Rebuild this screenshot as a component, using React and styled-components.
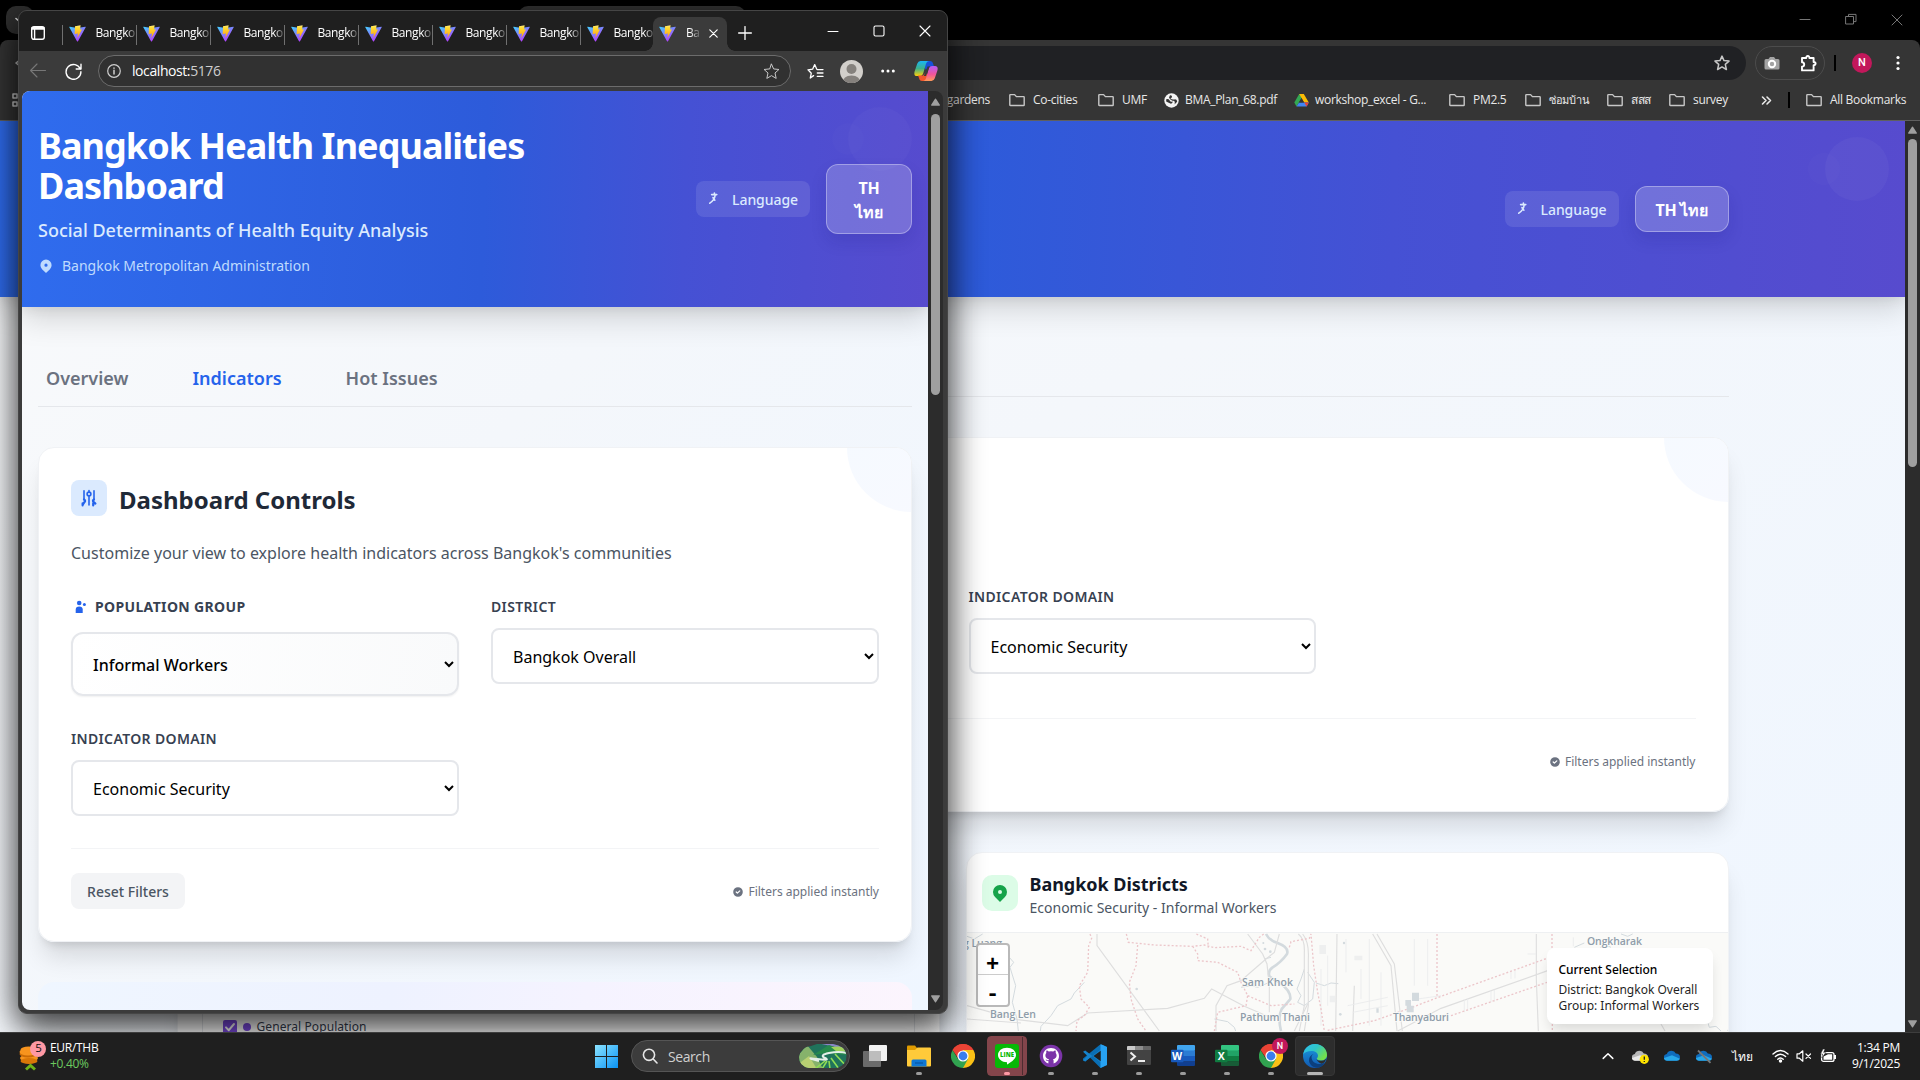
import React from "react";
import styled, { createGlobalStyle, css } from "styled-components";

const pageFont = `"Noto Sans", "Open Sans", sans-serif`;
const shellFont = `"Open Sans", "Noto Sans", sans-serif`;

const Global = createGlobalStyle`
  *, *::before, *::after { box-sizing: border-box; }
  body { margin: 0; overflow: hidden; background: #000; font-family: ${pageFont}; }
  h1, h2, h3, p { margin: 0; }
  svg { display: block; flex: none; }
`;

const Desktop = styled.div`
  position: relative;
  width: 1920px;
  height: 1080px;
  overflow: hidden;
  display: flex;
  flex-direction: column;
`;

/* ---------- Chrome window ---------- */
const ChromeWindow = styled.section`
  height: 1032px;
  display: flex;
  flex-direction: column;
  background: #000;
`;
const ChromeStrip = styled.div`
  height: 40px;
  display: flex;
  align-items: flex-start;
  padding: 6px 0 0 6px;
`;
const TabSearch = styled.div`
  width: 28px;
  height: 28px;
  border-radius: 10px;
  background: #2f2f2f;
  color: #ddd;
  display: flex;
  align-items: center;
  justify-content: center;
`;
const ChromeTab = styled.div`
  margin-left: 484px;
  width: 228px;
  height: 34px;
  border-radius: 10px 10px 0 0;
  background: #333;
`;
const ChromeControls = styled.div`
  margin: 7px 17px 0 auto;
  display: flex;
  gap: 34px;
  color: #777;
`;
const ChromeToolbar = styled.div`
  height: 40px;
  background: #353535;
  border-radius: 8px 8px 0 0;
  display: flex;
  align-items: center;
  padding: 6px 0 0 12px;
`;
const Omnibox = styled.div`
  margin-left: 118px;
  width: 1606px;
  height: 34px;
  border-radius: 17px;
  background: #202124;
  color: #c7c7c7;
  display: flex;
  align-items: center;
  justify-content: flex-end;
  padding-right: 16px;
`;
const ExtensionPill = styled.div`
  margin-left: 9px;
  width: 70px;
  height: 34px;
  border: 1px solid #4c4c4c;
  border-radius: 17px;
  display: flex;
  align-items: center;
  justify-content: space-between;
  padding: 0 7px 0 8px;
`;
const VLine = styled.div`
  width: 2px;
  height: 16px;
  background: #000;
  margin-left: ${(p) => p.$left}px;
`;
const Profile = styled.div`
  margin: 0 24px 0 16px;
  width: 20px;
  height: 20px;
  border-radius: 50%;
  background: #c2185b;
  color: #fff;
  font: 500 11px/20px Roboto, sans-serif;
  text-align: center;
`;
const Bookmarks = styled.div`
  height: 41px;
  background: #353535;
  border-bottom: 1px solid #5f5f5f;
  color: #e8e8e8;
  font: 12px/16px ${shellFont};
  letter-spacing: -0.3px;
  display: flex;
  align-items: center;
  padding-left: 12px;
`;
const FirstBookmark = styled.div`
  width: 983px;
  text-align: right;
  padding-right: 5px;
  margin: 0 14px 0 -14px;
`;
const Bookmark = styled.div`
  width: ${(p) => p.$w}px;
  margin-left: ${(p) => p.$left || 0}px;
  display: flex;
  align-items: center;
  gap: ${(p) => p.$gap || 8}px;
  white-space: nowrap;
  font-size: ${(p) => (p.$small ? 11 : 12)}px;
`;

/* ---------- Edge window ---------- */
const EdgeWindow = styled.section`
  position: absolute;
  left: 18px;
  top: 10px;
  width: 930px;
  height: 1004px;
  border-radius: 9px;
  background: #3b3b3b;
  border: 1px solid #454545;
  box-shadow: 0 12px 34px rgba(0, 0, 0, 0.68);
  overflow: hidden;
  display: flex;
  flex-direction: column;
`;
const EdgeShadow = styled.div`
  position: absolute;
  left: 18px;
  top: 10px;
  width: 930px;
  height: 1004px;
  border-radius: 9px;
  box-shadow: 0 12px 34px rgba(0, 0, 0, 0.3);
`;
const EdgeTabs = styled.div`
  height: 40px;
  background: #1f1f1f;
  display: flex;
  align-items: flex-end;
  padding-left: 12px;
  color: #fff;
`;
const Workspace = styled.div`
  width: 31px;
  height: 40px;
  flex: none;
  display: flex;
  align-items: center;
  padding-top: 4px;
`;
const EdgeTab = styled.div`
  width: 74px;
  flex: none;
  height: 34px;
  display: flex;
  align-items: center;
  padding: 0 0 2px ${(p) => (p.$active ? 6 : 6.5)}px;
  gap: 10px;
  font: 12px/16px ${shellFont};
  letter-spacing: -0.4px;
  background: linear-gradient(#707070, #707070) 0 8px / 1px 20px no-repeat;
  ${(p) =>
    p.$active &&
    css`
      background: #3b3b3b;
      border-radius: 8px 8px 0 0;
      position: relative;
      margin-left: -1px;
      &::before, &::after {
        content: "";
        position: absolute;
        bottom: 0;
        width: 8px;
        height: 8px;
      }
      &::before { left: -8px; background: radial-gradient(circle at 0 0, transparent 7.5px, #3b3b3b 8px); }
      &::after { right: -8px; background: radial-gradient(circle at 100% 0, transparent 7.5px, #3b3b3b 8px); }
    `}
`;
const TabLabel = styled.span`
  width: ${(p) => p.$w}px;
  overflow: hidden;
  white-space: nowrap;
  mask-image: linear-gradient(90deg, #000 ${(p) => p.$w - 9}px, transparent ${(p) => p.$w + 3}px);
`;
const EdgeControls = styled.div`
  height: 40px;
  flex: 1;
  display: flex;
  align-items: center;
  svg:first-child { margin: 3px 75px 0 11px; }
  svg:not(:first-child) { margin-right: 34px; }
`;
const EdgeToolbar = styled.div`
  height: 40px;
  display: flex;
  align-items: center;
  padding-left: 11px;
  color: #e8e8e8;
`;
const Gap = styled.span`
  width: ${(p) => p.$w}px;
  flex: none;
`;
const Address = styled.div`
  margin-left: 16px;
  width: 693px;
  height: 32px;
  border: 1px solid #6c6c6c;
  border-radius: 16px;
  background: #313131;
  display: flex;
  align-items: center;
  padding: 0 10px 0 8px;
  font: 14px/20px ${shellFont};
  letter-spacing: -0.42px;
  color: #cfcfcf;
  b { font-weight: 400; color: #fff; }
  span { margin: 0 auto 1px 11px; }
`;
const Avatar = styled.div`
  width: 23px;
  height: 23px;
  border-radius: 50%;
  overflow: hidden;
  margin: 0 18px 0 16px;
`;
const EdgeBody = styled.div`
  margin: 0 4px 0 3px;
  height: 919px;
  border-radius: 8px;
  overflow: hidden;
  display: flex;
`;

/* ---------- Scrollbar ---------- */
const ScrollTrack = styled.div`
  width: 15px;
  flex: none;
  background: #2c2c2c;
  display: flex;
  flex-direction: column;
  align-items: center;
  justify-content: space-between;
  padding: ${(p) => p.$pad};
`;
const Thumb = styled.div`
  width: 9px;
  height: ${(p) => p.$h}px;
  border-radius: 5px;
  background: #9f9f9f;
  margin: ${(p) => p.$top}px 0 auto;
`;

/* ---------- Dashboard page ---------- */
const PageRow = styled.div`
  display: flex;
  flex: 1;
  min-height: 0;
`;
const Page = styled.main`
  flex: 1;
  min-width: 0;
  overflow: hidden;
  background: linear-gradient(${(p) => p.$angle || "150deg"}, #f9fafb 0%, #f4f7fb 45%, #eff6ff 100%);
`;
const Hero = styled.header`
  position: relative;
  height: ${(p) => p.$h}px;
  padding: 0 ${(p) => p.$px}px;
  background: linear-gradient(92deg, #2f6cee 0%, #2d5bda 51%, #4551d4 73%, #574bce 100%);
  box-shadow: 0 12px 28px rgba(0, 0, 0, 0.15), 0 2px 12px rgba(0, 0, 0, 0.08);
  display: flex;
  align-items: center;
  justify-content: flex-end;
`;
const Bubble = styled.div`
  position: absolute;
  width: ${(p) => p.$d}px;
  height: ${(p) => p.$d}px;
  right: ${(p) => p.$right}px;
  top: ${(p) => p.$top}px;
  border-radius: 50%;
  background: rgba(255, 255, 255, ${(p) => p.$a});
`;
const HeroText = styled.div`
  align-self: flex-start;
  width: 560px;
  margin-right: auto;
  padding-top: 35px;
`;
const Title = styled.h1`
  color: #fff;
  font-size: 36px;
  line-height: 40px;
  font-weight: 700;
  letter-spacing: -0.95px;
`;
const Subtitle = styled.p`
  margin-top: 10px;
  color: #dbeafe;
  font-size: 18px;
  line-height: 28px;
  font-weight: 500;
`;
const Location = styled.div`
  margin-top: 12px;
  display: flex;
  align-items: center;
  gap: 8px;
  color: #bfdbfe;
  font-size: 14px;
  line-height: 20px;
`;
const LanguageChip = styled.div`
  width: 114px;
  height: 36px;
  padding-left: 12px;
  border-radius: 8px;
  background: rgba(255, 255, 255, 0.1);
  color: #dbeafe;
  font-size: 14px;
  line-height: 21px;
  font-weight: 500;
  letter-spacing: -0.05px;
  display: flex;
  align-items: center;
  gap: 8px;
`;
const LanguageButton = styled.button`
  margin-left: 16px;
  width: ${(p) => p.$w}px;
  padding: 11px 10px 9px;
  border: 1px solid rgba(255, 255, 255, 0.33);
  border-radius: 12px;
  background: rgba(255, 255, 255, 0.2);
  color: #fff;
  font: 700 16px/24px ${pageFont};
  letter-spacing: -0.3px;
  white-space: nowrap;
  box-shadow: 0 8px 16px rgba(20, 20, 120, 0.14);
  position: relative;
`;
const Container = styled.div`
  padding: 0 ${(p) => p.$px}px;
`;
const Nav = styled.nav`
  height: 100px;
  border-bottom: 1px solid #e5e7eb;
  margin-bottom: 40px;
  padding: 57px 0 0 8px;
  display: flex;
  gap: 64px;
`;
const NavItem = styled.a`
  color: ${(p) => (p.$active ? "#2563eb" : "#6b7280")};
  font-size: 18px;
  line-height: 28px;
  font-weight: 600;
`;
const Card = styled.section`
  position: relative;
  overflow: hidden;
  background: #fff;
  border: 1px solid #f0f2f5;
  border-radius: 16px;
`;
const CardShadow = styled.div`
  border-radius: 16px;
  box-shadow: 0 20px 25px -5px rgba(0, 0, 0, 0.12), 0 8px 10px -6px rgba(0, 0, 0, 0.13);
`;
const ControlsCard = styled(Card)`
  padding: 32px;
`;
const Corner = styled.div`
  position: absolute;
  right: -65px;
  top: -65px;
  width: 129px;
  height: 129px;
  border-radius: 50%;
  background: linear-gradient(135deg, #f5faff, #f8f9ff);
`;
const CardHead = styled.div`
  display: flex;
  gap: 12px;
  height: 36px;
  h2 { font-size: 24px; line-height: 32px; font-weight: 700; color: #1f2937; padding-top: 4px; }
`;
const IconTile = styled.div`
  width: 36px;
  height: 36px;
  border-radius: ${(p) => p.$r || 8}px;
  background: ${(p) => p.$bg};
  color: ${(p) => p.$c};
  display: flex;
  align-items: center;
  justify-content: center;
`;
const Intro = styled.p`
  margin-top: 25px;
  height: 24px;
  font-size: 16px;
  line-height: 24px;
  letter-spacing: 0.008px;
  color: #4b5563;
`;
const Fields = styled.div`
  margin-top: 32px;
  display: grid;
  grid-template-columns: repeat(${(p) => p.$cols}, 1fr);
  column-gap: 32px;
  row-gap: 33px;
  min-height: ${(p) => p.$min || 0}px;
  align-items: start;
`;
const Field = styled.label`
  grid-column: ${(p) => p.$col || "auto"};
  display: flex;
  flex-direction: column;
  gap: ${(p) => (p.$primary ? 15 : 11)}px;
`;
const FieldName = styled.span`
  display: flex;
  align-items: center;
  gap: 8px;
  height: 20px;
  color: #374151;
  font-size: 14px;
  line-height: 20px;
  font-weight: ${(p) => (p.$primary ? 700 : 600)};
  letter-spacing: 0.35px;
  svg { margin-left: 3px; margin-right: -1px; color: #2563eb; }
`;
const Select = styled.select`
  width: 100%;
  height: ${(p) => (p.$primary ? 64 : 56)}px;
  padding: 2px 0 0 16px;
  border: 2px solid #e5e7eb;
  border-radius: ${(p) => (p.$primary ? 12 : 8)}px;
  background: ${(p) => (p.$primary ? "linear-gradient(100deg, #fff, #f9fafb)" : "#fff")};
  box-shadow: ${(p) => (p.$primary ? "0 1px 2px rgba(0,0,0,.06)" : "none")};
  color: #000;
  font: ${(p) => (p.$primary ? 500 : 400)} 16px/24px ${pageFont};
`;
const CardFoot = styled.div`
  margin-top: 32px;
  border-top: 1px solid #f3f4f6;
  padding-top: 24px;
  height: 61px;
  display: flex;
  align-items: center;
  justify-content: space-between;
`;
const Reset = styled.button`
  width: 114px;
  height: 36px;
  border: 0;
  border-radius: 8px;
  background: #f3f4f6;
  color: #4b5563;
  font: 500 14px/20px ${pageFont};
  padding: 2px 0 0;
`;
const Applied = styled.div`
  margin-left: auto;
  padding-top: 1px;
  display: flex;
  align-items: center;
  gap: 4px;
  font-size: 12px;
  line-height: 16px;
  color: #6b7280;
`;
const NextCard = styled.div`
  margin-top: 40px;
  height: 120px;
  border-radius: 16px;
  background: linear-gradient(96deg, #eff6ff, #eef2ff 40%, #f5f3ff 62%, #fcf5fd);
`;
const TwoColumns = styled.div`
  margin-top: 40px;
  display: grid;
  grid-template-columns: 1fr 1fr;
  gap: 26px;
`;
const ChartCard = styled(Card)`
  height: 400px;
  padding: 24px;
`;
const ChartPanel = styled.div`
  height: 350px;
  border: 1px solid #e5e7eb;
  padding: 141px 0 0 20px;
`;
const Legend = styled.label`
  display: flex;
  align-items: center;
  font-size: 12px;
  line-height: 16px;
  letter-spacing: 0.08px;
  color: #374151;
`;
const Tick = styled.span`
  width: 14px;
  height: 14px;
  border-radius: 2px;
  background: #7c4be0;
  color: #fff;
  margin-right: 6px;
`;
const Dot = styled.span`
  width: 8px;
  height: 8px;
  border-radius: 50%;
  background: #7c4be0;
  margin-right: 6px;
`;
const MapHead = styled.div`
  height: 80px;
  padding: 22px 15px 0;
  border-bottom: 1px solid #eef0f2;
  display: flex;
  gap: 12px;
  h3 { font-size: 18px; line-height: 24px; font-weight: 700; color: #111827; margin-top: -3px; letter-spacing: -0.04px; }
  p { font-size: 14px; line-height: 20px; color: #4b5563; margin-top: 2px; }
`;
const MapArea = styled.div`
  position: relative;
  height: 320px;
  background: #fafaf8;
`;
const ZoomControl = styled.div`
  position: absolute;
  left: 9px;
  top: 10px;
  width: 34px;
  border: 2px solid #b9b9b9;
  border-radius: 4px;
  background: #fff;
  color: #000;
`;
const ZoomKey = styled.div`
  height: 30px;
  font: 700 22px/${(p) => (p.$line ? 41 : 39)}px "Liberation Mono", monospace;
  text-align: center;
  border-bottom: ${(p) => (p.$line ? "1px solid #ccc" : "0")};
`;
const Selection = styled.div`
  position: absolute;
  right: 15px;
  top: 15px;
  width: 166px;
  height: 76px;
  padding: 14px 12px 0;
  border-radius: 8px;
  background: #fff;
  box-shadow: 0 8px 14px -3px rgba(0, 0, 0, 0.14);
  font-size: 12px;
  line-height: 16px;
  color: #1f1f1f;
  white-space: nowrap;
  b { display: block; font-weight: 500; margin-bottom: 4px; color: #000; letter-spacing: -0.04px; }
`;

/* ---------- Taskbar ---------- */
const Taskbar = styled.footer`
  position: relative;
  height: 48px;
  background: #1f1f1f;
  box-shadow: inset 0 1px 0 #3d3d3d;
  display: flex;
  align-items: center;
  font-family: ${shellFont};
  color: #fff;
`;
const Ticker = styled.div`
  width: 584px;
  padding-left: 19px;
  display: flex;
  align-items: center;
  gap: 3px;
  font-size: 12px;
  line-height: 16px;
  letter-spacing: -0.3px;
  p + p { color: #6ccb5f; }
`;
const TaskSlot = styled.div`
  width: 44px;
  height: 48px;
  display: flex;
  justify-content: center;
  align-items: center;
  position: relative;
  &::after {
    content: "";
    position: absolute;
    bottom: 5px;
    left: calc(50% - ${(p) => (p.$bar || 0) / 2}px);
    width: ${(p) => p.$bar || 0}px;
    height: 3px;
    border-radius: 2px;
    background: ${(p) => p.$barColor || "#9b9b9b"};
  }
`;
const Plate = styled.div`
  width: 40px;
  height: 40px;
  border-radius: 4px;
  background: ${(p) => p.$bg};
  border: 1px solid ${(p) => p.$line};
  display: flex;
  align-items: center;
  justify-content: center;
`;
const SearchBox = styled.div`
  margin: 0 3px;
  width: 219px;
  height: 32px;
  border-radius: 16px;
  border: 1px solid #555;
  background: #3c3c3c;
  display: flex;
  align-items: center;
  padding: 0 2px 0 10px;
  font-size: 14px;
  color: #d0d0d0;
  letter-spacing: -0.42px;
  span { margin: 0 auto 0 10px; }
`;
const Tray = styled.div`
  margin-left: auto;
  padding-right: 20px;
  display: flex;
  align-items: center;
`;
const TrayCell = styled.div`
  width: ${(p) => p.$w}px;
  display: flex;
  justify-content: center;
  font-size: 12px;
`;
const Clock = styled.div`
  width: 56px;
  text-align: right;
  font-size: 12px;
  line-height: 16px;
  letter-spacing: -0.25px;
  white-space: nowrap;
`;
const NBadge = styled.span`
  position: absolute;
  left: 23px;
  top: 6px;
  width: 16px;
  height: 16px;
  border-radius: 50%;
  background: #c2185b;
  font: 500 9px/16px Roboto, sans-serif;
  text-align: center;
`;

/* ---------- Icons ---------- */
const Stroke = ({ w = 16, h, box, sw = 1.2, color = "currentColor", children, d }) => (
  <svg width={w} height={h || w} viewBox={box || `0 0 ${w} ${h || w}`} fill="none" stroke={color} strokeWidth={sw} strokeLinecap="round" strokeLinejoin="round">
    {d ? <path d={d} /> : children}
  </svg>
);
const Folder = () => <Stroke sw={1.4} color="#c7c7c7" d="M.8 12.6V3.2Q.8 2.6 1.4 2.6H5.6L7.4 4.6H14.6Q15.2 4.6 15.2 5.2V12.9Q15.2 13.5 14.6 13.5H1.4Q.8 13.5.8 12.9Z" />;
const Pin = ({ s }) => (
  <svg width={s} height={s} viewBox="0 0 20 20" fill="currentColor">
    <path fillRule="evenodd" d="M5.05 4.05a7 7 0 119.9 9.9L10 18.9l-4.95-4.95a7 7 0 010-9.9zM10 11a2 2 0 100-4 2 2 0 000 4z" />
  </svg>
);
const Vite = () => (
  <svg width="17" height="17" viewBox="0 0 17 17">
    <defs>
      <linearGradient id="va" x1="0" y1="0" x2=".7" y2="1"><stop offset="0" stopColor="#41d1ff" /><stop offset="1" stopColor="#bd34fe" /></linearGradient>
      <linearGradient id="vb" x1="0" y1="0" x2="0" y2="1"><stop offset="0" stopColor="#ffea83" /><stop offset=".2" stopColor="#ffdd35" /><stop offset="1" stopColor="#ff9b0f" /></linearGradient>
    </defs>
    <path fill="url(#va)" d="M.3 2.2Q0 1.6.7 1.7L8.5 3 16.3 1.7Q17 1.6 16.7 2.2L9 16.2Q8.5 16.8 8 16.2Z" />
    <path fill="url(#vb)" d="M6 1.2 11.6.2 11.1 4.6 13 4.4 8.4 13 8.9 8.5 5.7 9Z" />
  </svg>
);
const StarIcon = ({ w = 16, sw = 1.2 }) => <Stroke w={w} box="0 0 16 16" sw={sw} d="M8 1.1 10 5.6 15 6.1 11.3 9.4 12.4 14.5 8 11.9 3.6 14.5 4.7 9.4 1 6.1 6 5.6Z" />;
const LangIcon = () => (
  <Stroke sw={1.6} box="0 0 16 16">
    <path d="M3.6 3.6H8.8M6.4 2V3.6M7.2 4Q6.6 9 1.8 12.2M5 6.5Q5.6 8.3 6.8 9.2" />
  </Stroke>
);
const Sliders = () => (
  <Stroke w={20} sw={1.6}>
    <path d="M5 2.8V11M15 2.8V11M10 8.6V17M10 2.6V3.6" />
    <circle cx="10" cy="6" r="1.9" />
    <path d="M5 11.5Q7 13 5.4 14.2L3.6 16.8M15 11.5Q13 13 14.8 14.2L16.4 15.6M3.6 15.4V17.4M14.2 15.4V17.4" strokeWidth="2.2" />
  </Stroke>
);
const People = () => (
  <svg width="14" height="14" viewBox="0 0 14 14" fill="currentColor">
    <circle cx="5.2" cy="3" r="2.3" /><circle cx="10.4" cy="4.5" r="1.5" /><path d="M1.7 13V9.6Q1.7 6.6 5.2 6.6T8.7 9.6V13Z" />
  </svg>
);
const CheckCircle = () => (
  <svg width="12" height="12" viewBox="0 0 20 20" fill="currentColor">
    <path fillRule="evenodd" d="M10 18a8 8 0 100-16 8 8 0 000 16zm3.707-9.293a1 1 0 00-1.414-1.414L9 10.586 7.707 9.293a1 1 0 00-1.414 1.414l2 2a1 1 0 001.414 0l4-4z" />
  </svg>
);
const Globe = () => (
  <svg width="15" height="15" viewBox="0 0 15 15"><circle cx="7.5" cy="7.5" r="7.2" fill="#f4f4f4" /><path d="M2.2 6.3Q4.5 5.2 5.5 7.2T8.8 8.6Q8.6 11 6.4 10.6 4 9.8 2.2 8.6ZM6 2.2Q8.4 2 8 3.8T6.2 5.4Q8 6.8 10.4 6.4T13.2 8.4Q12 10.4 10.2 11.2L9.4 13Q11.2 10.6 10.8 9T8.4 7.8Q5.4 6.6 5 4.6Z" fill="#353535" /></svg>
);
const Drive = () => (
  <svg width="15" height="15" viewBox="0 0 15 15"><path d="M5.2 1 9.8 1 7.5 5 2.5 13.6.3 9.6Z" fill="#34a853" /><path d="M5.2 1H9.8L14.8 9.6H10.2Z" fill="#fbbc04" /><path d="M5 9.6H14.8L12.6 13.6H2.5Z" fill="#4285f4" /><path d="M10.2 9.6H14.8L12.6 13.6Z" fill="#ea4335" /><path d="M7.5 5.2 9.9 9.6H5Z" fill="#353535" /></svg>
);
const Copilot = () => (
  <svg width="24" height="22" viewBox="0 0 24 22">
    <defs>
      <linearGradient id="ca" x1="0" y1="0" x2="0" y2="1"><stop offset="0" stopColor="#19b5f5" /><stop offset=".5" stopColor="#3eb28a" /><stop offset="1" stopColor="#ffcf0a" /></linearGradient>
      <linearGradient id="cb" x1="0" y1="0" x2="0" y2="1"><stop offset="0" stopColor="#b45cf5" /><stop offset=".55" stopColor="#f0549b" /><stop offset="1" stopColor="#ff9a5a" /></linearGradient>
    </defs>
    <path d="M7 1H16Q18.5 1 19.2 4L20 6.5H15L12 10Z" fill="#1750d8" />
    <path d="M6.5 1H15Q12.8 1 12 3.8L9 14Q8.2 16 6 16H3Q-.5 16 .6 11.5L3.2 3.8Q4.2 1 6.5 1Z" fill="url(#ca)" />
    <path d="M17 21H8Q5.5 21 5 18L4 15.5H9L12 12Z" fill="#f2552c" />
    <path d="M17.5 21H9.2Q11.3 21 12 18.2L15 8Q15.8 6 18 6H21Q24.5 6 23.4 10.5L20.8 18.2Q19.8 21 17.5 21Z" fill="url(#cb)" />
    <path d="M13.5 6.5H15.5L12 16H9.8Z" fill="#3b3b3b" />
  </svg>
);
const ChromeLogo = () => (
  <svg width="24" height="24" viewBox="0 0 24 24">
    <path d="M12 12 1.6 6A12 12 0 0 1 22.4 6Z" fill="#ea4335" />
    <path d="M12 12V6H22.4A12 12 0 0 1 12 24Z" fill="#fbc116" />
    <path d="M12 12 17 15 12 24A12 12 0 0 1 1.6 6L7 15Z" fill="#31a350" />
    <path d="M12 6H22.4A12 12 0 0 0 1.6 6L7 14Z" fill="#ea4335" />
    <circle cx="12" cy="12" r="5.6" fill="#fff" /><circle cx="12" cy="12" r="4.4" fill="#3b7ded" />
  </svg>
);
const Office = ({ c, letter }) => (
  <svg width="24" height="24" viewBox="0 0 24 24">
    <rect x="6" y="1" width="18" height="6" rx="1" fill={c[0]} /><rect x="6" y="6.5" width="18" height="5.6" fill={c[1]} /><rect x="6" y="12" width="18" height="5.6" fill={c[2]} /><path d="M6 17.5H24V21Q24 22 23 22H7Q6 22 6 21Z" fill={c[3]} />
    <rect x="0" y="5.8" width="12.5" height="12.5" rx="1" fill={c[4]} />
    <text x="6.2" y="15.8" textAnchor="middle" fill="#fff" fontFamily="Open Sans, sans-serif" fontWeight="700" fontSize="10.5">{letter}</text>
  </svg>
);
const Cloud = ({ gray, slash, warn }) => (
  <svg width="18" height="18" viewBox="0 0 18 18">
    <path d="M4.2 13.6Q.9 13.3.9 10.2.9 7.5 3.8 7 5 3.8 8.6 3.8 11.6 3.8 12.8 6.6 16.8 6.6 17 10.1 17 13.4 13.8 13.6Z" fill={gray ? "#b8b8b8" : "#0f6cbd"} />
    <path d="M4 13.8Q1 13.3 1 11L9 8.2 17 11.8Q16.3 13.8 13.8 13.8Z" fill={gray ? "#e8e8e8" : "#28a8ea"} />
    {slash && <path d="M3 3.5 15.5 15.8" stroke="#777" strokeWidth="1.8" />}
    {warn && <><circle cx="13.3" cy="12.3" r="4.6" fill="#ffe400" /><path d="M13.3 9.6V12.8M13.3 14.1V15" stroke="#222" strokeWidth="1.3" /></>}
  </svg>
);
const Arrow = ({ down }) => (
  <svg width="9" height="8" viewBox="0 0 9 8"><path d={down ? "M0 1Q0 .3.7.3H8.3Q9 .3 9 1L5 7.2Q4.5 8 4 7.2Z" : "M0 7Q0 7.7.7 7.7H8.3Q9 7.7 9 7L5 .8Q4.5 0 4 .8Z"} fill="#9f9f9f" /></svg>
);

const Scrollbar = ({ thumb, gap, pad }) => (
  <ScrollTrack $pad={pad}>
    <Arrow />
    <Thumb $h={thumb} $top={gap} />
    <Arrow down />
  </ScrollTrack>
);

const Language = ({ width, children }) => (
  <>
    <LanguageChip><LangIcon />Language</LanguageChip>
    <LanguageButton $w={width}>{children}</LanguageButton>
  </>
);

const Choice = ({ name, value, primary, col }) => (
  <Field $primary={primary} $col={col}>
    <FieldName $primary={primary}>{primary && <People />}{name}</FieldName>
    <Select $primary={primary} defaultValue={value}><option>{value}</option></Select>
  </Field>
);

const AppliedNote = () => <Applied><CheckCircle />Filters applied instantly</Applied>;

/* Base map strokes; the group scale keeps three drawing units per pixel. */
const MapDrawing = () => (
  <svg width="761" height="100" viewBox="0 0 761 100">
    <g transform="translate(-26 -94) scale(.33333)" fill="none">
      <g stroke="#d3dade" strokeWidth="3">
        <path d="M78 292 100 300 125 285M205 355 218 370 207 385 224 440 214 490 228 540 232 576M430 430 400 462 390 480 350 500 330 530 300 562 298 576M900 445 930 440 950 445 985 430M1090 390 1080 420 1068 450 1080 470 1070 490 1090 500 1115 480 1120 430 1100 400M1125 432 1150 440 1170 432 1192 434M820 540 860 548 880 565 884 576M970 360 990 355" />
        <path d="M2040 285 2060 292 2075 285M1978 325 1995 318 2010 325M1900 325 1930 312M2300 548 2305 565 2325 562 2340 576M2360 576 2365 566" />
      </g>
      <path d="M975 285Q985 305 1010 312 1045 325 1038 345 1020 370 995 385 980 395 985 412 1000 425 1015 430 1050 455 1048 480 1040 490 1022 510 1010 535 1020 576" stroke="#d3dade" strokeWidth="8" />
      <g stroke="#dedede" strokeWidth="3.5">
        <path d="M468 285V320L655 576M78 500 230 542 380 560 440 522 680 508 790 478 812 450 910 502 1000 540M825 576V500L858 440 900 425 975 360 1000 340 1015 285M920 285 965 345 978 375 985 440V520M1188 285 1184 576M78 540 240 552M1240 440 1235 576M1786 285V420L1792 576M1500 508 1820 395M1370 576 1500 508M2160 555 2172 576M1060 576 1100 495" />
        <path d="M1072 285Q1092 300 1090 340V500L1075 576M1085 285Q1105 310 1102 360V500L1090 576M1295 285 1350 380 1368 576M1308 285 1360 375 1384 576" />
      </g>
      <g stroke="#e9ebec" strokeWidth="2.5">
        <path d="M1140 390V560M1160 350V500M1215 300V400M1260 390V480M1285 300V560M1320 400V560M1420 300V440M1460 300V440M1235 520 1340 500M1220 500 1340 475M1430 480 1500 470M1570 480V520M1580 478V515M1650 455V490M1660 452V488M1710 395V420M1722 390V418M1760 345H1785M1897 295V322" />
      </g>
      <g stroke="#ecc6ca" strokeWidth="4" strokeDasharray="6 6">
        <path d="M447 285 452 298 443 320 440 400 415 440 420 480 445 505 430 530 408 545 405 576M556 285 562 310 640 318 755 322 790 318 820 326 900 322 930 335 955 295 968 285M766 285 800 300 802 326M755 322 770 345 770 365 830 370 890 400 900 430 920 470 915 500 830 520 820 576M590 318 585 380 565 430 570 480 590 540 615 576M920 470 990 500 1060 495M1045 325 1050 308 1105 298 1110 285 1118 380 1130 460 1140 510 1150 576M1160 574 1300 545 1400 510 1500 472 1818 358M1530 530 1818 430M1488 285V470M1833 285V330M1834 555V576" />
      </g>
      <g fill="#d3dade"><path d="M1413 461H1434V486H1413ZM1393 483H1410V500H1418V520H1397V500H1393Z" /><circle cx="972" cy="330" r="4" /><circle cx="988" cy="338" r="4" /><circle cx="967" cy="312" r="3" /><circle cx="587" cy="450" r="4" /><circle cx="1209" cy="312" r="3.5" /><circle cx="1198" cy="526" r="4" /><path d="M1306 508H1313V521H1306Z" /></g>
      <g fill="#eeefef"><path d="M1135 318H1155V345H1135ZM1240 350H1264V364H1240ZM1166 470H1182V490H1166Z" /></g>
    </g>
    <g fill="#8f9daa" fontFamily="Open Sans, sans-serif" fontWeight="600" fontSize="10.5" stroke="#fafaf8" strokeWidth="1.5" paintOrder="stroke">
      <text x="-4" y="14" textLength="39">g Luang</text>
      <text x="23" y="85" textLength="46">Bang Len</text>
      <text x="275" y="53" textLength="51">Sam Khok</text>
      <text x="273" y="88" textLength="70">Pathum Thani</text>
      <text x="426" y="88" textLength="56">Thanyaburi</text>
      <text x="620" y="12" textLength="55">Ongkharak</text>
    </g>
  </svg>
);

const bookmarks = [
  { label: "Co-cities", w: 89 },
  { label: "UMF", w: 66 },
  { label: "BMA_Plan_68.pdf", w: 130, icon: <Globe /> },
  { label: "workshop_excel - G...", w: 155, icon: <Drive /> },
  { label: "PM2.5", w: 76 },
  { label: "ซ่อมบ้าน", w: 82, small: true },
  { label: "สสส", w: 62 },
  { label: "survey", w: 92 },
];

const ChromeApp = () => (
  <ChromeWindow>
    <ChromeStrip>
      <TabSearch><Stroke w={10} sw={1.6} d="M1 3.5 5 7 9 3.5" /></TabSearch>
      <ChromeTab />
      <ChromeControls>
        <Stroke w={12} sw={1} d="M1 6.5H11" />
        <Stroke w={12} sw={1}><path d="M1 3.5H8.5V11H1ZM3.5 3.3V1.4H11V8.6H8.8" /></Stroke>
        <Stroke w={12} sw={1} d="M1 2 11 12M11 2 1 12" h={13} />
      </ChromeControls>
    </ChromeStrip>
    <ChromeToolbar>
      <Stroke w={10} sw={1.6} color="#ccc" d="M9 1 4 5 9 9" />
      <Omnibox><StarIcon w={16} sw={1.5} /></Omnibox>
      <ExtensionPill>
        <svg width="16" height="14" viewBox="0 0 16 14"><path d="M2 3H4.5L6 1H10L11.5 3H14Q15.5 3 15.5 4.5V12Q15.5 13.5 14 13.5H2Q.5 13.5.5 12V4.5Q.5 3 2 3Z" fill="#a3a3a3" /><circle cx="8" cy="8" r="3.2" fill="none" stroke="#fff" strokeWidth="2" /></svg>
        <Stroke w={17} sw={1.9} color="#fff" d="M2 3H6.2Q6.2 1 7.8 1T9.4 3H13.6V7Q15.6 7 15.6 8.6T13.6 10.2V15.4H2V11.6Q4.2 11.4 4.2 9.4T2 7.2Z" />
      </ExtensionPill>
      <VLine $left={9} />
      <Profile>N</Profile>
      <svg width="4" height="16" viewBox="0 0 4 16" fill="#fff"><circle cx="2" cy="2.5" r="1.6" /><circle cx="2" cy="8" r="1.6" /><circle cx="2" cy="13.5" r="1.6" /></svg>
    </ChromeToolbar>
    <Bookmarks>
      <Stroke w={14} sw={1.5} color="#ccc" d="M1 1H5V5H1ZM9 1H13V5H9ZM1 9H5V13H1ZM9 9H13V13H9Z" />
      <FirstBookmark>gardens</FirstBookmark>
      {bookmarks.map((b) => (
        <Bookmark key={b.label} $w={b.w} $gap={b.icon ? 6 : 8} $small={b.small}>{b.icon || <Folder />}{b.label}</Bookmark>
      ))}
      <Stroke w={11} sw={1.6} d="M1.5 2 5 5.5 1.5 9M6 2 9.5 5.5 6 9" />
      <VLine $left={16} />
      <Bookmark $w={110} $left={16}><Folder />All Bookmarks</Bookmark>
    </Bookmarks>
    <PageRow>
      <Page $angle="150deg">
        <Hero $h={176} $px={176.5}>
          <Bubble $d={64} $right={16} $top={16} $a={0.035} />
          <Bubble $d={32} $right={65} $top={32} $a={0.016} />
          <Language width={94}>TH ไทย</Language>
        </Hero>
        <Container $px={176.5}>
          <Nav />
          <CardShadow>
            <ControlsCard>
              <Corner />
              <CardHead />
              <Intro />
              <Fields $cols={4} $min={99}>
                <Choice name="INDICATOR DOMAIN" value="Economic Security" col={3} />
              </Fields>
              <CardFoot><AppliedNote /></CardFoot>
            </ControlsCard>
          </CardShadow>
          <TwoColumns>
            <CardShadow>
              <ChartCard>
                <ChartPanel>
                  <Legend>
                    <Tick><Stroke w={14} sw={2} d="M3 7.4 5.8 10.2 11 4" /></Tick>
                    <Dot />General Population
                  </Legend>
                </ChartPanel>
              </ChartCard>
            </CardShadow>
            <CardShadow>
              <Card>
                <MapHead>
                  <IconTile $bg="#dcfce7" $c="#16a34a" $r={10}><Pin s={20} /></IconTile>
                  <div>
                    <h3>Bangkok Districts</h3>
                    <p>Economic Security - Informal Workers</p>
                  </div>
                </MapHead>
                <MapArea>
                  <MapDrawing />
                  <ZoomControl>
                    <ZoomKey $line>+</ZoomKey>
                    <ZoomKey>-</ZoomKey>
                  </ZoomControl>
                  <Selection>
                    <b>Current Selection</b>
                    District: Bangkok Overall<br />Group: Informal Workers
                  </Selection>
                </MapArea>
              </Card>
            </CardShadow>
          </TwoColumns>
        </Container>
      </Page>
      <Scrollbar thumb={328} gap={5} pad="5px 0 4px" />
    </PageRow>
  </ChromeWindow>
);

const EdgeApp = () => (
  <EdgeWindow>
    <EdgeTabs>
      <Workspace>
        <Stroke w={14} sw={1.4}><rect x=".7" y=".7" width="12.6" height="12.6" rx="2.2" /><path d="M1 3H13M1 1.8H13M3.6 4V13" /></Stroke>
      </Workspace>
      {Array.from({ length: 8 }, (_, i) => (
        <EdgeTab key={i}><Vite /><TabLabel $w={39}>Bangkok</TabLabel></EdgeTab>
      ))}
      <EdgeTab $active>
        <Vite /><TabLabel $w={13}>Ban</TabLabel>
        <Stroke w={9} sw={1.2} d="M.8.8 8.2 8.2M8.2.8.8 8.2" />
      </EdgeTab>
      <EdgeControls>
        <Stroke w={14} sw={1.3} d="M7 .6V13.4M.6 7H13.4" />
        <Stroke w={12} sw={1} d="M1 6.5H11" />
        <Stroke w={12} sw={1.1}><rect x="1" y="1" width="10" height="10" rx="1.5" /></Stroke>
        <Stroke w={12} sw={1.1} d="M1 1 11 11M11 1 1 11" />
      </EdgeControls>
    </EdgeTabs>
    <EdgeToolbar>
      <Stroke w={16} sw={1.1} color="#777" d="M15.5 7.5H.8M7 1 .6 7.5 7 14" />
      <Gap $w={19} />
      <Stroke w={17} sw={1.4} color="#fff"><path d="M15.4 6.2A7.4 7.4 0 1 0 15.9 8.8M16 1.2V6H11.2" /></Stroke>
      <Address>
        <Stroke w={14} sw={1.2}><circle cx="7" cy="7" r="6.3" /><path d="M7 6.3V10M7 4V4.2" strokeWidth="1.5" /></Stroke>
        <span><b>localhost:</b>5176</span>
        <StarIcon w={17} sw={0.9} />
      </Address>
      <Gap $w={16} />
      <Stroke w={17} sw={1.3} color="#fff"><path d="M6.6 12.6 3.3 15 4.3 10.2 1 6.8 5.6 6.2 7.7 1.6 9.8 6.2M10.3 6.6H16M10.3 10H16M10.3 13.4H16" /></Stroke>
      <Avatar><svg width="23" height="23" viewBox="0 0 23 23"><rect width="23" height="23" fill="#d2cfcb" /><circle cx="11.5" cy="9" r="5" fill="#85817d" /><path d="M2.5 23Q3 15.5 11.5 15.5T20.5 23Z" fill="#85817d" /></svg></Avatar>
      <svg width="14" height="4" viewBox="0 0 14 4" fill="#fff"><circle cx="1.7" cy="2" r="1.5" /><circle cx="7" cy="2" r="1.5" /><circle cx="12.3" cy="2" r="1.5" /></svg>
      <Gap $w={19} />
      <Copilot />
    </EdgeToolbar>
    <EdgeBody>
      <Page $angle="135deg">
        <Hero $h={216} $px={16}>
          <Bubble $d={64} $right={16} $top={16} $a={0.022} />
          <Bubble $d={32} $right={64} $top={32} $a={0.012} />
          <HeroText>
            <Title>Bangkok Health Inequalities Dashboard</Title>
            <Subtitle>Social Determinants of Health Equity Analysis</Subtitle>
            <Location><Pin s={16} />Bangkok Metropolitan Administration</Location>
          </HeroText>
          <Language width={86}>TH<br />ไทย</Language>
        </Hero>
        <Container $px={16}>
          <Nav>
            <NavItem>Overview</NavItem>
            <NavItem $active>Indicators</NavItem>
            <NavItem>Hot Issues</NavItem>
          </Nav>
          <CardShadow>
            <ControlsCard>
              <Corner />
              <CardHead>
                <IconTile $bg="#dbeafe" $c="#2563eb"><Sliders /></IconTile>
                <h2>Dashboard Controls</h2>
              </CardHead>
              <Intro>Customize your view to explore health indicators across Bangkok's communities</Intro>
              <Fields $cols={2}>
                <Choice primary name="POPULATION GROUP" value="Informal Workers" />
                <Choice name="DISTRICT" value="Bangkok Overall" />
                <Choice name="INDICATOR DOMAIN" value="Economic Security" />
              </Fields>
              <CardFoot><Reset>Reset Filters</Reset><AppliedNote /></CardFoot>
            </ControlsCard>
          </CardShadow>
          <NextCard />
        </Container>
      </Page>
      <Scrollbar thumb={281} gap={8} pad="7px 0 7px" />
    </EdgeBody>
  </EdgeWindow>
);

const Shell = () => (
  <Taskbar>
    <Ticker>
      <svg width="28" height="30" viewBox="0 0 28 30">
        <g fill="#f7941e"><ellipse cx="10" cy="17" rx="9" ry="3.6" /><ellipse cx="9" cy="13" rx="8.5" ry="3.4" fill="#c96a06" /><ellipse cx="9" cy="11" rx="8.5" ry="3.4" /><ellipse cx="10" cy="20" rx="8.5" ry="3" fill="#d97708" /><ellipse cx="9.5" cy="8.5" rx="8" ry="3" /></g>
        <path d="M7 28.5 11.5 24.5 16 28.5" stroke="#6fb31b" strokeWidth="3" fill="none" />
        <circle cx="19" cy="8" r="8" fill="#ff99a4" />
        <text x="19.5" y="11.1" textAnchor="middle" fontFamily="Open Sans, sans-serif" fontSize="11.5" fill="#111">5</text>
      </svg>
      <div><p>EUR/THB</p><p>+0.40%</p></div>
    </Ticker>
    <TaskSlot>
      <svg width="23" height="23" viewBox="0 0 23 23"><defs><linearGradient id="win" gradientUnits="userSpaceOnUse" x1="0" y1="0" x2="23" y2="23"><stop offset="0" stopColor="#8be3ff" /><stop offset="1" stopColor="#0a93f5" /></linearGradient></defs><path d="M0 0H11V11H0ZM12 0H23V11H12ZM0 12H11V23H0ZM12 12H23V23H12Z" fill="url(#win)" /></svg>
    </TaskSlot>
    <SearchBox>
      <Stroke w={16} sw={1.6} color="#e6e6e6"><circle cx="7" cy="6.8" r="5.6" /><path d="M11.2 11 15 15" /></Stroke>
      <span>Search</span>
      <svg width="50" height="26" viewBox="0 0 50 26">
        <defs><clipPath id="sc"><path d="M2 14Q4 4 14 3L20 1H36Q48 3 49.5 12 50 22 40 25H12Q2 23 2 14Z" /></clipPath></defs>
        <g clipPath="url(#sc)"><rect width="50" height="26" fill="#20735b" /><path d="M20 0H50V8L34 3Z" fill="#8a83c7" /><path d="M0 14 10 2 20 14 26 26H0Z" fill="#86b26b" /><path d="M0 22 12 13 20 26H0Z" fill="#b8cf72" /><path d="M16 12 32 2 50 8V12L30 10Z" fill="#278a4c" /><path d="M34 4Q48 2 50 8L40 9Z" fill="#9fd05c" /><path d="M50 10Q42 8 32 10T28 15 20 16 22 18" stroke="#e5efe8" strokeWidth="2" fill="none" /><path d="M28 18 18 26M30 18 25 26M32 18 33 26M34 15 42 26M38 11 50 24" stroke="#8fdc54" strokeWidth="1.6" /></g>
      </svg>
    </SearchBox>
    <TaskSlot><svg width="24" height="22" viewBox="0 0 24 22"><rect y="6" width="18" height="16" rx="1" fill="#6b6b6b" /><rect x="6" width="18" height="16" rx="1" fill="#f3f3f3" /><path d="M6 6H18V16H6Z" fill="#bdbdbd" /></svg></TaskSlot>
    <TaskSlot $bar={6}><svg width="24" height="22" viewBox="0 0 24 22"><path d="M0 1.5Q0 .5 1 .5H8L10 3V6H0Z" fill="#e09b00" /><path d="M0 5H8L10.5 2.5H23Q24 2.5 24 3.5V20.5Q24 21.5 23 21.5H1Q0 21.5 0 20.5Z" fill="#ffca3a" /><path d="M4.5 16Q4.5 14.5 6 14.5H18Q19.5 14.5 19.5 16V21.5H4.5Z" fill="#0f78d4" /><path d="M8 18H16" stroke="#0a57a0" strokeWidth="1.2" /></svg></TaskSlot>
    <TaskSlot><ChromeLogo /></TaskSlot>
    <TaskSlot $bar={6} $barColor="#ff99a4">
      <Plate $bg="linear-gradient(90deg,#84454b 34px,#4e2c30 34px,#4e2c30 35px,#84454b 35px)" $line="#84454b">
        <svg width="24" height="24" viewBox="0 0 24 24"><rect width="24" height="24" rx="3" fill="#06b906" /><path d="M12 3.8C17.2 3.8 21 7 21 11 21 15.5 14.5 19 12 20.6V18.2C6.8 18.2 3 15 3 11S6.8 3.8 12 3.8Z" fill="#fff" /><text x="12" y="13.2" textAnchor="middle" fontFamily="Open Sans, sans-serif" fontWeight="800" fontSize="6" fill="#06b906">LINE</text></svg>
      </Plate>
    </TaskSlot>
    <TaskSlot $bar={6}><svg width="24" height="24" viewBox="0 0 24 24"><circle cx="12" cy="12" r="11.3" fill="#7b34a8" /><path d="M12 4C7.5 4 4 7.4 4 12 4 15.6 6.2 18.4 9.4 19.6V17C7.5 17.4 7.2 16 6.6 15.5 7.8 15.4 8.2 16.6 9.5 16.2L10 15.2C7.4 14.8 6.4 13.4 6.4 11.3 6.4 10.3 6.8 9.5 7.3 8.9 7.1 8.1 7.2 7.2 7.5 6.6 8.4 6.6 9.2 7.2 9.8 7.6Q12 7 14.2 7.6C14.8 7.2 15.6 6.6 16.5 6.6 16.8 7.2 16.9 8.1 16.7 8.9 17.2 9.5 17.6 10.3 17.6 11.3 17.6 13.4 16.5 14.8 14 15.2 14.5 15.7 14.6 16.2 14.6 17V19.6C17.8 18.4 20 15.6 20 12 20 7.4 16.5 4 12 4Z" fill="#fff" /></svg></TaskSlot>
    <TaskSlot $bar={6}><svg width="24" height="24" viewBox="0 0 24 24"><path d="M17.5 0 24 3V21L17.5 24 7 13.5 2.2 17.4 0 16.2V14.6L17.8 0Z" fill="#0a6fb5" /><path d="M0 7.8 2.2 6.6 17.8 18.5V5.5L2.2 17.4 0 16.2 4.5 12Z" fill="#1583cc" /><path d="M17.5 0 24 3V21L17.5 24Z" fill="#27a2f2" /><path d="M17.7 6.8V17.2L10.5 12Z" fill="#1f1f1f" /><path d="M0 9.8 2.5 12 0 14.2Z" fill="#1f1f1f" /></svg></TaskSlot>
    <TaskSlot $bar={6}><svg width="24" height="20" viewBox="0 0 24 20"><rect width="24" height="19" rx="1" fill="#434343" /><path d="M0 1Q0 0 1 0H8V4H0Z" fill="#c9c9c9" /><path d="M8 0H16V4H8Z" fill="#8d8d8d" /><path d="M16 0H23Q24 0 24 1V4H16Z" fill="#666" /><path d="M3.5 6.5 8 10.5 3.5 14.5M11 15H18" stroke="#eee" strokeWidth="2" fill="none" /></svg></TaskSlot>
    <TaskSlot $bar={6}><Office letter="W" c={["#41a5ee", "#2b7cd3", "#185abd", "#103f91", "#185abd"]} /></TaskSlot>
    <TaskSlot $bar={6}><Office letter="X" c={["#33c481", "#21a366", "#107c41", "#185c37", "#107c41"]} /></TaskSlot>
    <TaskSlot $bar={6}>
      <ChromeLogo />
      <NBadge>N</NBadge>
    </TaskSlot>
    <TaskSlot $bar={16} $barColor="#b5b5b5">
      <Plate $bg="#2d2d2d" $line="#363636">
        <svg width="24" height="24" viewBox="0 0 24 24">
          <defs><linearGradient id="eg" x1="0" y1="0" x2="1" y2=".6"><stop offset="0" stopColor="#2fc2ef" /><stop offset=".5" stopColor="#2fc5c8" /><stop offset="1" stopColor="#74e04a" /></linearGradient><linearGradient id="eb" x1="0" y1="0" x2="0" y2="1"><stop offset="0" stopColor="#1a9fe0" /><stop offset="1" stopColor="#1257b0" /></linearGradient></defs>
          <circle cx="12" cy="12" r="12" fill="url(#eb)" />
          <path d="M.2 10.5C1.2 4.5 6 0 12 0 19 0 24 5 24 11 24 14.5 21.2 16.5 18 16.5 15 16.5 13.8 15.5 13.8 14.8 13.8 14 15 13.6 15 11.8 15 9 12 7 8.5 7 4.5 7 1.5 8.5.2 10.5Z" fill="url(#eg)" />
          <path d="M8.5 13C8.5 17.5 12.5 20 16.5 20 19 20 21 19.2 22.3 18.2 20.5 21.5 17.5 23.4 14.5 23.8 9 23.5 6 19.5 6 16.5 6 13 8 10.8 11 10 9.5 10.8 8.5 11.6 8.5 13Z" fill="#0c3f7e" />
          <path d="M24 12.5Q23.5 16.5 18 16.8 14.5 17 13.6 15.2 14 17.5 18.5 19.8 22.5 19 24 12.5Z" fill="#2d2d2d" />
        </svg>
      </Plate>
    </TaskSlot>
    <Tray>
      <TrayCell $w={32}><Stroke w={12} sw={1.5} color="#fff" d="M1.2 8.4 6 3.8 10.8 8.4" /></TrayCell>
      <TrayCell $w={32}><Cloud gray warn /></TrayCell>
      <TrayCell $w={32}><Cloud /></TrayCell>
      <TrayCell $w={32}><Cloud slash /></TrayCell>
      <TrayCell $w={44}>ไทย</TrayCell>
      <TrayCell $w={32}><Stroke w={17} h={14} sw={1.4} color="#fff"><path d="M1 5Q8.5-2 16 5M3.4 7.6Q8.5 2.8 13.6 7.6M5.8 10.2Q8.5 7.6 11.2 10.2" /><circle cx="8.5" cy="12" r="1" fill="#fff" /></Stroke></TrayCell>
      <TrayCell $w={16}><Stroke w={16} sw={1.2} color="#fff" d="M1 5.8H3.4L6.8 2.8V13.2L3.4 10.2H1ZM10 6 14.5 10.4M14.5 6 10 10.4" /></TrayCell>
      <TrayCell $w={32}><svg width="17" height="14" viewBox="0 0 17 14"><rect x="1.6" y="3.6" width="12.4" height="8.8" rx="2" fill="none" stroke="#fff" strokeWidth="1.3" /><path d="M3.5 7.5 8 5.3H12.2V10.8H3.5Z" fill="#fff" /><path d="M15 6V10" stroke="#fff" strokeWidth="2" /><path d="M3 0 .5 5H2.5L1.8 9 5.8 3.6H3.6L5 0Z" fill="#fff" stroke="#1f1f1f" strokeWidth=".5" /></svg></TrayCell>
      <Clock>1:34 PM<br />9/1/2025</Clock>
    </Tray>
  </Taskbar>
);

export default function App() {
  return (
    <Desktop>
      <Global />
      <ChromeApp />
      <EdgeShadow />
      <EdgeApp />
      <Shell />
    </Desktop>
  );
}
